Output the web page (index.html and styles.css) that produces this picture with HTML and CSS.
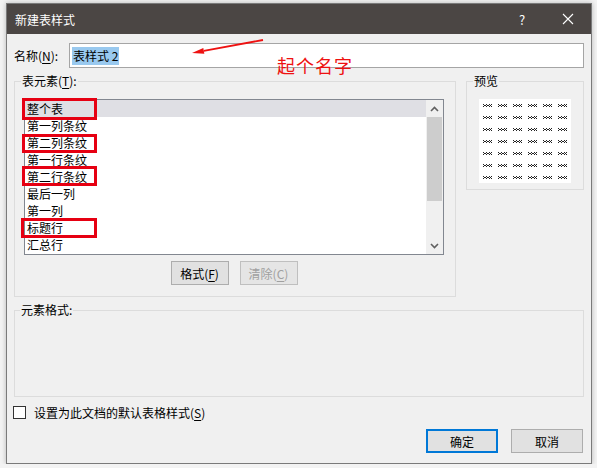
FILE: index.html
```html
<!DOCTYPE html>
<html lang="zh-CN">
<head>
    <meta charset="UTF-8">
    <meta name="viewport" content="width=device-width, initial-scale=1.0">
    <title>新建表样式</title>
<link rel="stylesheet" href="styles.css">
</head>
<body>
    <div class="window">
        <div class="titlebar">
            <span class="title">新建表样式</span>
            <span class="tb-btn help">?</span>
            <span class="tb-btn close">
                <svg width="12" height="12" viewBox="0 0 12 12"><path d="M1 1L11 11M11 1L1 11" stroke="#fff" stroke-width="1.1" fill="none"/></svg>
            </span>
        </div>
        <div class="body">
            <div class="name-row">
                <label class="name-label">名称(<u>N</u>):</label>
                <div class="name-input"><span class="sel">表样式 2</span></div>
            </div>
            <div class="mid-row">
                <fieldset class="group elements">
                    <legend>表元素(<u>T</u>):</legend>
                    <div class="listbox">
                        <ul class="items">
                            <li class="selected">整个表</li>
                            <li>第一列条纹</li>
                            <li>第二列条纹</li>
                            <li>第一行条纹</li>
                            <li>第二行条纹</li>
                            <li>最后一列</li>
                            <li>第一列</li>
                            <li>标题行</li>
                            <li>汇总行</li>
                        </ul>
                        <div class="scrollbar">
                            <div class="sb-arrow">
                                <svg width="9" height="6" viewBox="0 0 9 6"><path d="M1 5L4.5 1.5L8 5" stroke="#606060" stroke-width="1.6" fill="none"/></svg>
                            </div>
                            <div class="sb-track"><div class="sb-thumb"></div></div>
                            <div class="sb-arrow">
                                <svg width="9" height="6" viewBox="0 0 9 6"><path d="M1 1L4.5 4.5L8 1" stroke="#606060" stroke-width="1.6" fill="none"/></svg>
                            </div>
                        </div>
                    </div>
                    <div class="list-btns">
                        <button class="btn small">格式(<u>F</u>)</button>
                        <button class="btn small" disabled>清除(<u>C</u>)</button>
                    </div>
                </fieldset>
                <fieldset class="group preview">
                    <legend>预览</legend>
                    <div class="preview-box">
                        <svg width="92" height="84" viewBox="0 0 92 84">
                            <defs>
                                <pattern id="mark" x="4" y="5" width="15" height="12" patternUnits="userSpaceOnUse">
                                    <path d="M0 0h1v1h-1zM3 0h1v1h-1zM6 0h1v1h-1zM1 1h1v1h-1zM4 1h1v1h-1zM7 1h1v1h-1zM0 2h1v1h-1zM3 2h1v1h-1zM6 2h1v1h-1zM2 1h1v1h-1zM5 1h1v1h-1zM8 0h1v1h-1zM8 2h1v1h-1z" fill="#222"/>
                                </pattern>
                            </defs>
                            <rect x="4" y="5" width="86" height="76" fill="url(#mark)"/>
                        </svg>
                    </div>
                </fieldset>
            </div>
            <fieldset class="group format">
                <legend>元素格式:</legend>
            </fieldset>
            <div class="check-row">
                <span class="checkbox"></span>
                <span>设置为此文档的默认表格样式(<u>S</u>)</span>
            </div>
            <div class="action-row">
                <button class="btn wide default">确定</button>
                <button class="btn wide">取消</button>
            </div>
        </div>

        <!-- red notes drawn on top of the dialog -->
        <svg class="note-arrow" width="90" height="25" viewBox="0 0 90 25">
            <path d="M78 5L18.8 15.8" stroke="#ee1111" stroke-width="1.8" fill="none"/>
            <path d="M7 18L19.3 18.8L18.3 12.9Z" fill="#ee1111"/>
        </svg>
        <div class="note-text">起个名字</div>
        <div class="mark-box box1"></div>
        <div class="mark-box box2"></div>
        <div class="mark-box box3"></div>
        <div class="mark-box box4"></div>
    </div>
</body>
</html>
```

FILE: styles.css
```css
* {
    box-sizing: border-box;
}
body {
    margin: 0;
    background: #f3f3f3;
    font-family: "Noto Sans CJK SC", "Noto Sans", sans-serif;
    font-size: 12px;
    color: #000;
}
u {
    text-decoration: underline;
    text-underline-offset: 2px;
}
.window {
    position: relative;
    margin: 3px 0 0 6px;
    width: 586px;
    height: 461px;
    border: 1px solid #7a7a7a;
    background: #f0f0f0;
    box-shadow: 0 0 5px rgba(0, 0, 0, 0.25);
    display: flex;
    flex-direction: column;
}
.titlebar {
    height: 30px;
    background: #4b4644;
    color: #fff;
    display: flex;
    align-items: center;
    padding-left: 8px;
}
.title {
    flex: 1;
}
.tb-btn {
    width: 46px;
    height: 30px;
    display: flex;
    align-items: center;
    justify-content: center;
}
.help {
    font-size: 13px;
}
.body {
    padding: 9px 7px 0 7px;
    display: flex;
    flex-direction: column;
}
.name-row {
    display: flex;
    align-items: center;
    height: 25px;
}
.name-label {
    width: 55px;
}
.name-input {
    width: 515px;
    height: 25px;
    background: #fff;
    border: 1px solid #a5a5a5;
    display: flex;
    align-items: center;
    padding-left: 2px;
}
.sel {
    background: #99c9ef;
    line-height: 18px;
    padding: 0 1px;
}
.mid-row {
    display: flex;
    gap: 10px;
    margin-top: 5px;
    align-items: flex-start;
}
.group {
    margin: 0;
    border: 1px solid #dcdcdc;
    min-width: 0;
}
.group legend {
    line-height: 16px;
    padding: 0 1px;
}
.elements {
    width: 442px;
    padding: 10px 11px 11px 9px;
}
.elements legend {
    margin-left: -3px;
}
.listbox {
    height: 156px;
    border: 1px solid #828790;
    background: #fff;
    display: flex;
}
.items {
    list-style: none;
    margin: 0;
    padding: 0;
    flex: 1;
}
.items li {
    height: 17px;
    line-height: 17px;
    padding-left: 2px;
}
.items li.selected {
    background: #dfdfe4;
}
.scrollbar {
    width: 17px;
    background: #f0f0f0;
    display: flex;
    flex-direction: column;
}
.sb-arrow {
    height: 17px;
    display: flex;
    align-items: center;
    justify-content: center;
}
.sb-track {
    flex: 1;
    padding: 0 1px;
}
.sb-thumb {
    height: 84px;
    background: #cdcdcd;
}
.list-btns {
    display: flex;
    justify-content: center;
    gap: 11px;
    margin-top: 6px;
}
.btn {
    height: 24px;
    background: #e1e1e1;
    border: 1px solid #adadad;
    font-family: inherit;
    font-size: 12px;
    color: #000;
    padding: 0;
}
.btn.small {
    width: 58px;
}
.btn:disabled {
    color: #a0a0a0;
    border-color: #bfbfbf;
    background: #e5e5e5;
}
.btn.wide {
    width: 72px;
}
.btn.default {
    border: 2px solid #0078d7;
}
.preview {
    flex: 1;
    padding: 10px 12px 6px 12px;
}
.preview legend {
    margin-left: -6px;
}
.preview-box {
    width: 92px;
    height: 84px;
    background: #fff;
}
.preview-box svg {
    display: block;
}
.format {
    margin-top: 5px;
    height: 95px;
    padding: 0 8px;
}
.format legend {
    margin-left: -3px;
}
.check-row {
    display: flex;
    align-items: center;
    gap: 8px;
    margin: 8px 0 0 -1px;
    height: 14px;
}
.checkbox {
    width: 13px;
    height: 13px;
    background: #fff;
    border: 1px solid #333;
}
.action-row {
    display: flex;
    justify-content: flex-end;
    gap: 13px;
    margin-top: 10px;
    padding-right: 1px;
}
.note-arrow {
    position: absolute;
    left: 178px;
    top: 31px;
}
.note-text {
    position: absolute;
    left: 270px;
    top: 51px;
    color: #ee1111;
    font-size: 18px;
    line-height: 20px;
    letter-spacing: 1px;
}
.mark-box {
    position: absolute;
    border: 3px solid #e60012;
    width: 75px;
}
.box1 {
    left: 15px;
    top: 94px;
    height: 22px;
}
.box2 {
    left: 15px;
    top: 130px;
    height: 19px;
}
.box3 {
    left: 15px;
    top: 162px;
    height: 20px;
}
.box4 {
    left: 14px;
    top: 214px;
    width: 76px;
    height: 20px;
}
```
